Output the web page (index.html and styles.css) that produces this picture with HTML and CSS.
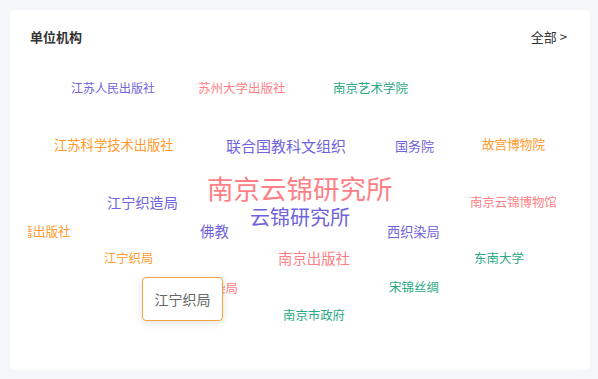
FILE: index.html
```html
<!DOCTYPE html>
<html lang="zh">
<head>
<meta charset="utf-8">
<link rel="stylesheet" href="styles.css">
</head>
<body>
<div class="card">
  <div class="card-head">
    <div class="title">单位机构</div>
    <div class="more">全部 &gt;</div>
  </div>
  <div class="cloud">
    <span class="w purple" style="left:43px;top:22px;font-size:12px">江苏人民出版社</span>
    <span class="w pink" style="left:170px;top:22px;font-size:12.5px">苏州大学出版社</span>
    <span class="w green" style="left:305px;top:22px;font-size:12.5px">南京艺术学院</span>
    <span class="w orange" style="left:26px;top:78px;font-size:13.3px">江苏科学技术出版社</span>
    <span class="w purple" style="left:198px;top:77.5px;font-size:15px">联合国教科文组织</span>
    <span class="w purple" style="left:367px;top:78.5px;font-size:13px">国务院</span>
    <span class="w orange" style="left:454px;top:78px;font-size:12.6px">故宫博物院</span>
    <span class="w pink" style="left:179px;top:115px;font-size:26.5px">南京云锦研究所</span>
    <span class="w purple" style="left:222px;top:147px;font-size:20px">云锦研究所</span>
    <span class="w pink" style="left:442px;top:136px;font-size:12.4px">南京云锦博物馆</span>
    <span class="w purple" style="left:79px;top:135px;font-size:14.2px">江宁织造局</span>
    <span class="w orange" style="left:-46px;top:164.5px;font-size:12.7px">江苏古籍出版社</span>
    <span class="w purple" style="left:172px;top:164px;font-size:14.5px">佛教</span>
    <span class="w purple" style="left:359px;top:164.5px;font-size:13.2px">西织染局</span>
    <span class="w orange" style="left:76px;top:192px;font-size:12.3px">江宁织局</span>
    <span class="w pink" style="left:250px;top:191px;font-size:14.4px">南京出版社</span>
    <span class="w green" style="left:446px;top:192px;font-size:12.5px">东南大学</span>
    <span class="w pink" style="left:147.5px;top:222px;font-size:12.5px">江宁织染局</span>
    <span class="w green" style="left:361px;top:221px;font-size:12.5px">宋锦丝绸</span>
    <span class="w green" style="left:255px;top:249px;font-size:12.4px">南京市政府</span>
    <div class="tip">江宁织局</div>
  </div>
</div>
</body>
</html>
```

FILE: styles.css
```css
html, body {
  margin: 0;
  padding: 0;
}
body {
  background: #f5f6fa;
  font-family: "Noto Sans CJK SC", "Noto Sans", sans-serif;
  width: 598px;
  height: 379px;
  overflow: hidden;
}
.card {
  margin: 10px 0 0 10px;
  width: 580px;
  height: 360px;
  background: #ffffff;
  border-radius: 4px;
  display: flex;
  flex-direction: column;
}
.card-head {
  display: flex;
  justify-content: space-between;
  align-items: center;
  padding: 18px 23px 0 20px;
  height: 18px;
}
.title {
  font-size: 13px;
  font-weight: 600;
  color: #333333;
  line-height: 18px;
}
.more {
  font-size: 13px;
  color: #333333;
  line-height: 18px;
}
.cloud {
  position: relative;
  margin: 14px 0 0 18px;
  width: 544px;
  height: 300px;
  overflow: hidden;
}
.w {
  position: absolute;
  line-height: 1;
  white-space: nowrap;
}
.purple { color: #6f63dc; }
.pink { color: #ff7f86; }
.green { color: #2aa985; }
.orange { color: #ff9a2b; }
.tip {
  position: absolute;
  left: 114px;
  top: 217px;
  width: 81px;
  height: 44px;
  box-sizing: border-box;
  border: 1px solid #f5a33c;
  border-radius: 4px;
  background: #ffffff;
  box-shadow: 0 2px 8px rgba(0, 0, 0, 0.12);
  display: flex;
  align-items: center;
  justify-content: center;
  font-size: 14px;
  color: #666666;
}
```
